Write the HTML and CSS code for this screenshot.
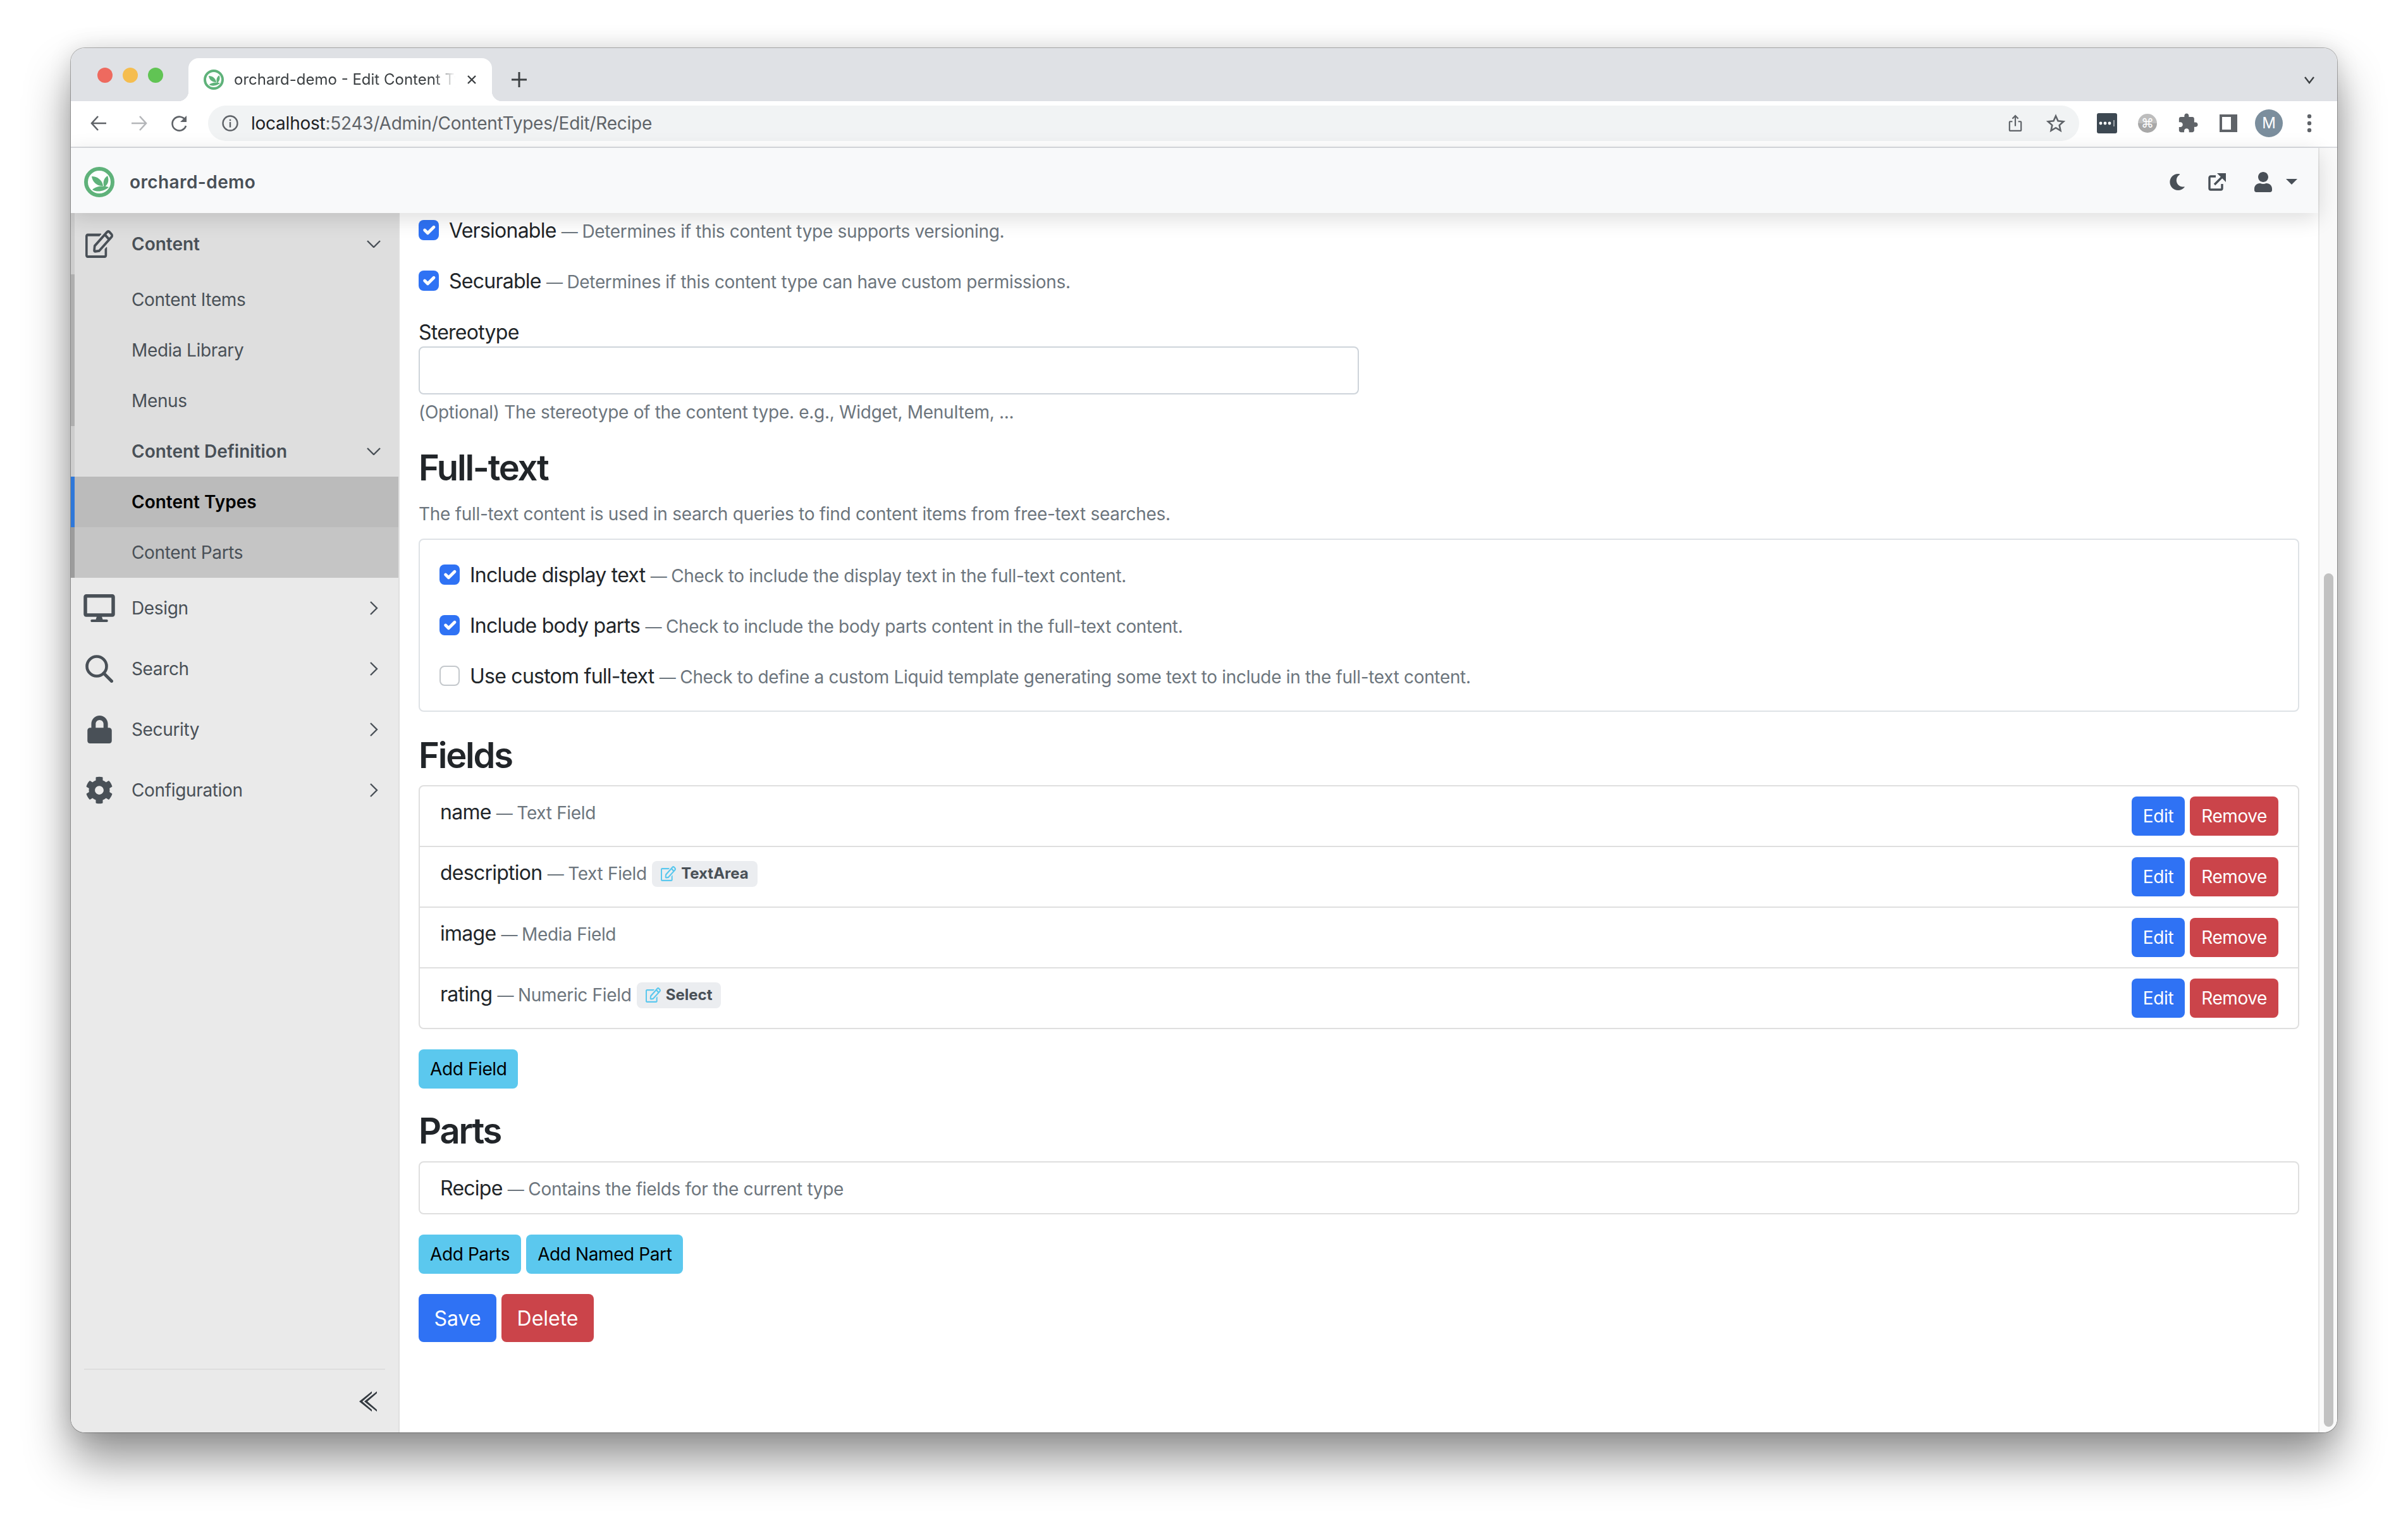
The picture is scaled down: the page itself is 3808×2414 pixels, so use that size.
FILE: index.html
```html
<!DOCTYPE html>
<html lang="en">
<head>
    <meta charset="UTF-8">
    <title>orchard-demo - Edit Content Type</title>
    <link rel="stylesheet" href="styles.css">
</head>
<body>
    <svg class="defs" width="0" height="0">
        <symbol id="logo" viewBox="0 0 48 48">
            <circle cx="24" cy="24" r="21" fill="#fff" stroke="#5fb27a" stroke-width="6"/>
            <path fill="#5fb27a" d="M12 15c9 0 17 6 18 15-9 1-17-6-18-15zM37 14c3 7 1 14-5 18-3-7-1-14 5-18zM13 36c5-5 16-7 26-4-6 6-18 9-26 4z"/>
        </symbol>
        <symbol id="pen" viewBox="0 0 576 512" preserveAspectRatio="none">
            <path d="M402.3 344.9l32-32c5-5 13.7-1.5 13.7 5.7V464c0 26.5-21.5 48-48 48H48c-26.5 0-48-21.5-48-48V112c0-26.5 21.5-48 48-48h273.5c7.1 0 10.7 8.6 5.7 13.7l-32 32c-1.5 1.5-3.5 2.3-5.7 2.3H48v352h352V350.5c0-2.1.8-4.1 2.3-5.6zm156.6-201.8L296.3 405.7l-90.4 10c-26.2 2.9-48.5-19.2-45.6-45.6l10-90.4L432.9 17.1c22.9-22.9 59.9-22.9 82.7 0l43.2 43.2c22.9 22.9 22.9 60 .1 82.8zM460.1 174L402 115.9 216.2 301.8l-7.3 65.3 65.3-7.3L460.1 174zm64.8-79.7l-43.2-43.2c-4.1-4.1-10.8-4.1-14.8 0L436 82l58.1 58.1 30.9-30.9c4-4.2 4-10.8-.1-14.9z"/>
        </symbol>
        <symbol id="tick" viewBox="0 0 20 20">
            <path fill="none" stroke="#fff" stroke-width="3" stroke-linecap="round" stroke-linejoin="round" d="m6 10 3 3 6-6"/>
        </symbol>
        <symbol id="chev-down" viewBox="0 0 22 12">
            <path fill="none" stroke="currentColor" stroke-width="2.4" d="M1 1l10 10L21 1"/>
        </symbol>
        <symbol id="chev-right" viewBox="0 0 14 22">
            <path fill="none" stroke="currentColor" stroke-width="2.4" d="M2 1l10 10L2 21"/>
        </symbol>
    </svg>

    <div class="window">
        <div class="tabstrip">
            <div class="lights">
                <span class="light red"></span>
                <span class="light yellow"></span>
                <span class="light green"></span>
            </div>
            <div class="tab">
                <svg class="favicon"><use href="#logo"/></svg>
                <span class="tab-title">orchard-demo - Edit Content Type</span>
                <svg class="tab-close" viewBox="0 0 16 16"><path fill="none" stroke="#3c4043" stroke-width="2.4" d="M2 2l12 12M14 2L2 14"/></svg>
            </div>
            <svg class="tab-new" viewBox="0 0 24 24"><path fill="none" stroke="#3c4043" stroke-width="3" d="M12 0v24M0 12h24"/></svg>
            <svg class="tab-menu" viewBox="0 0 18 12"><path fill="none" stroke="#3c4043" stroke-width="2.4" d="M2 1l7 9 7-9"/></svg>
        </div>

        <div class="toolbar">
            <svg class="tool" viewBox="0 0 28 28"><path fill="none" stroke="#5f6368" stroke-width="2.6" d="M26 14H3M13 3L3 14l10 11"/></svg>
            <svg class="tool muted" viewBox="0 0 28 28"><path fill="none" stroke="#b4b6b9" stroke-width="2.6" d="M2 14h23M15 3l10 11-10 11"/></svg>
            <svg class="tool" viewBox="0 0 28 28"><path fill="none" stroke="#5f6368" stroke-width="2.6" d="M23 9a11 11 0 1 0 1 9"/><path fill="#5f6368" d="M25 2v10H15z"/></svg>
            <div class="omnibox">
                <svg class="site-info" viewBox="0 0 26 26"><circle cx="13" cy="13" r="11.5" fill="none" stroke="#5f6368" stroke-width="2.4"/><path fill="#5f6368" d="M11.8 11h2.4v8.5h-2.4zM11.8 6.8h2.4v2.4h-2.4z"/></svg>
                <span class="url"><b>localhost</b>:5243/Admin/ContentTypes/Edit/Recipe</span>
                <svg class="omni-share" viewBox="0 0 24 30"><path fill="none" stroke="#5f6368" stroke-width="2.4" d="M7 12H3a1 1 0 0 0-1 1v14a1 1 0 0 0 1 1h18a1 1 0 0 0 1-1V13a1 1 0 0 0-1-1h-4M12 20V3M7 7l5-5 5 5"/></svg>
                <svg class="omni-star" viewBox="0 0 30 30"><path fill="none" stroke="#5f6368" stroke-width="2.6" d="M15 3.5l3.5 7.9 8.6.9-6.4 5.8 1.8 8.5-7.5-4.4-7.5 4.4 1.8-8.5-6.4-5.8 8.6-.9z"/></svg>
            </div>
            <div class="extensions">
                <svg class="ext-pass" viewBox="0 0 32 32"><rect width="32" height="32" rx="3" fill="#3d4852"/><circle cx="6" cy="16" r="2.4" fill="#fff"/><circle cx="13" cy="16" r="2.4" fill="#fff"/><circle cx="20" cy="16" r="2.4" fill="#fff"/><path stroke="#fff" d="M27 11v10"/></svg>
                <span class="ext-cmd">⌘</span>
                <svg class="ext-puzzle" viewBox="0 0 24 24"><path fill="#5f6368" d="M20.5 11H19V7c0-1.1-.9-2-2-2h-4V3.5C13 2.12 11.88 1 10.5 1S8 2.12 8 3.5V5H4c-1.1 0-1.99.9-1.99 2v3.8H3.5c1.49 0 2.7 1.21 2.7 2.7s-1.21 2.7-2.7 2.7H2V20c0 1.1.9 2 2 2h3.8v-1.5c0-1.49 1.21-2.7 2.7-2.7 1.49 0 2.7 1.21 2.7 2.7V22H17c1.1 0 2-.9 2-2v-4h1.5c1.38 0 2.5-1.12 2.5-2.5S21.88 11 20.5 11z"/></svg>
                <span class="ext-panel"></span>
                <span class="avatar">M</span>
                <svg class="ext-menu" viewBox="0 0 8 32"><circle cx="4" cy="5" r="3.2" fill="#5f6368"/><circle cx="4" cy="16" r="3.2" fill="#5f6368"/><circle cx="4" cy="27" r="3.2" fill="#5f6368"/></svg>
            </div>
        </div>

        <div class="viewport">
            <div class="page">
                <nav class="navbar">
                    <svg class="brand-logo"><use href="#logo"/></svg>
                    <span class="brand">orchard-demo</span>
                    <div class="nav-actions">
                        <svg class="act-moon" viewBox="0 0 512 512"><path d="M283.211 512c78.962 0 151.079-35.925 198.857-94.792 7.068-8.708-.639-21.43-11.562-19.35-124.203 23.654-238.262-71.576-238.262-196.954 0-72.222 38.662-138.635 101.498-174.394 9.686-5.512 7.25-20.197-3.756-22.23A258.156 258.156 0 0 0 283.211 0c-141.309 0-256 114.511-256 256 0 141.309 114.511 256 256 256z"/></svg>
                        <svg class="act-open" viewBox="0 0 28 28"><path fill="none" stroke="#495057" stroke-width="3.4" d="M12 5H4a2 2 0 0 0-2 2v17a2 2 0 0 0 2 2h16a2 2 0 0 0 2-2v-7M10 18L24 4"/><path fill="#495057" d="M14 0h14v14z"/></svg>
                        <svg class="act-user" viewBox="0 0 448 512"><path d="M224 256c70.7 0 128-57.3 128-128S294.7 0 224 0 96 57.3 96 128s57.3 128 128 128zm89.6 32h-16.7c-22.2 10.2-46.9 16-72.9 16s-50.6-5.8-72.9-16h-16.7C60.2 288 0 348.2 0 422.4V464c0 26.5 21.5 48 48 48h352c26.5 0 48-21.5 48-48v-41.6c0-74.2-60.2-134.4-134.4-134.4z"/></svg>
                        <span class="caret"></span>
                    </div>
                </nav>

                <div class="layout">
                    <aside class="sidebar">
                        <div class="menu">
                            <div class="menu-open">
                                <a class="menu-head">
                                    <span class="menu-icon"><svg class="ic-pen"><use href="#pen"/></svg></span>
                                    <span class="menu-label strong">Content</span>
                                    <svg class="chev-down"><use href="#chev-down"/></svg>
                                </a>
                                <a class="sub-item strip">Content Items</a>
                                <a class="sub-item strip">Media Library</a>
                                <a class="sub-item strip">Menus</a>
                                <a class="sub-item">
                                    <span class="menu-label strong">Content Definition</span>
                                    <svg class="chev-down"><use href="#chev-down"/></svg>
                                </a>
                                <a class="sub-item active">Content Types</a>
                                <a class="sub-item sibling">Content Parts</a>
                            </div>
                            <a class="menu-item">
                                <span class="menu-icon"><svg class="ic-desktop" viewBox="0 0 576 512"><path d="M528 0H48C21.5 0 0 21.5 0 48v320c0 26.5 21.5 48 48 48h192l-16 48h-72c-13.3 0-24 10.7-24 24s10.7 24 24 24h272c13.3 0 24-10.7 24-24s-10.7-24-24-24h-72l-16-48h192c26.5 0 48-21.5 48-48V48c0-26.5-21.5-48-48-48zm-16 352H64V64h448v288z"/></svg></span>
                                <span class="menu-label">Design</span>
                                <svg class="chev-right"><use href="#chev-right"/></svg>
                            </a>
                            <a class="menu-item">
                                <span class="menu-icon"><svg class="ic-search" viewBox="0 0 44 44"><circle cx="18" cy="18" r="15.5" fill="none" stroke="#495057" stroke-width="4.6"/><path stroke="#495057" stroke-width="5" stroke-linecap="round" d="M29 29l12.5 12.5"/></svg></span>
                                <span class="menu-label">Search</span>
                                <svg class="chev-right"><use href="#chev-right"/></svg>
                            </a>
                            <a class="menu-item">
                                <span class="menu-icon"><svg class="ic-lock" viewBox="0 0 448 512"><path d="M400 224h-24v-72C376 68.2 307.8 0 224 0S72 68.2 72 152v72H48c-26.5 0-48 21.5-48 48v192c0 26.5 21.5 48 48 48h352c26.5 0 48-21.5 48-48V272c0-26.5-21.5-48-48-48zm-104 0H152v-72c0-39.7 32.3-72 72-72s72 32.3 72 72v72z"/></svg></span>
                                <span class="menu-label">Security</span>
                                <svg class="chev-right"><use href="#chev-right"/></svg>
                            </a>
                            <a class="menu-item">
                                <span class="menu-icon"><svg class="ic-gear" viewBox="0 0 512 512"><path d="M487.4 315.7l-42.6-24.6c4.3-23.2 4.3-47 0-70.2l42.6-24.6c4.9-2.8 7.1-8.6 5.5-14-11.1-35.6-30-67.8-54.7-94.6-3.8-4.1-10-5.1-14.8-2.3L380.8 110c-17.9-15.4-38.5-27.3-60.8-35.1V25.8c0-5.6-3.9-10.5-9.4-11.7-36.7-8.2-74.3-7.8-109.2 0-5.5 1.2-9.4 6.1-9.4 11.7V75c-22.2 7.9-42.8 19.8-60.8 35.1L88.7 85.5c-4.9-2.8-11-1.9-14.8 2.3-24.7 26.7-43.6 58.9-54.7 94.6-1.7 5.4.6 11.2 5.5 14L67.3 221c-4.3 23.2-4.3 47 0 70.2l-42.6 24.6c-4.9 2.8-7.1 8.6-5.5 14 11.1 35.6 30 67.8 54.7 94.6 3.8 4.1 10 5.1 14.8 2.3l42.6-24.6c17.9 15.4 38.5 27.3 60.8 35.1v49.2c0 5.6 3.9 10.5 9.4 11.7 36.7 8.2 74.3 7.8 109.2 0 5.5-1.2 9.4-6.1 9.4-11.7v-49.2c22.2-7.9 42.8-19.8 60.8-35.1l42.6 24.6c4.9 2.8 11 1.9 14.8-2.3 24.7-26.7 43.6-58.9 54.7-94.6 1.5-5.5-.7-11.3-5.6-14.1zM256 336c-44.1 0-80-35.9-80-80s35.9-80 80-80 80 35.9 80 80-35.9 80-80 80z"/></svg></span>
                                <span class="menu-label">Configuration</span>
                                <svg class="chev-right"><use href="#chev-right"/></svg>
                            </a>
                        </div>
                        <div class="sidebar-foot">
                            <svg class="collapse" viewBox="0 0 28 32"><path fill="#343a40" d="M20 0v3L5 16l15 13v3L0 16zM28 0v3L13 16l15 13v3L8 16z"/></svg>
                        </div>
                    </aside>

                    <main class="content">
                        <div class="check-row">
                            <span class="check on"><svg><use href="#tick"/></svg></span>
                            <span>Versionable <small><i>—</i> Determines if this content type supports versioning.</small></span>
                        </div>
                        <div class="check-row">
                            <span class="check on"><svg><use href="#tick"/></svg></span>
                            <span>Securable <small><i>—</i> Determines if this content type can have custom permissions.</small></span>
                        </div>

                        <label class="field-label">Stereotype</label>
                        <input class="form-control" type="text">
                        <p class="hint">(Optional) The stereotype of the content type. e.g., Widget, MenuItem, ...</p>

                        <h3 class="first-title">Full-text</h3>
                        <p class="hint lead">The full-text content is used in search queries to find content items from free-text searches.</p>
                        <div class="box">
                            <div class="check-row">
                                <span class="check on"><svg><use href="#tick"/></svg></span>
                                <span>Include display text <small><i>—</i> Check to include the display text in the full-text content.</small></span>
                            </div>
                            <div class="check-row">
                                <span class="check on"><svg><use href="#tick"/></svg></span>
                                <span>Include body parts <small><i>—</i> Check to include the body parts content in the full-text content.</small></span>
                            </div>
                            <div class="check-row">
                                <span class="check"></span>
                                <span>Use custom full-text <small><i>—</i> Check to define a custom Liquid template generating some text to include in the full-text content.</small></span>
                            </div>
                        </div>

                        <h3 class="after-box">Fields</h3>
                        <ul class="list">
                            <li class="list-row">
                                <span class="row-text">name <small><i>—</i> Text Field</small></span>
                                <span class="row-actions"><button class="btn btn-sm btn-primary">Edit</button><button class="btn btn-sm btn-danger">Remove</button></span>
                            </li>
                            <li class="list-row">
                                <span class="row-text">description <small><i>—</i> Text Field</small> <span class="badge"><svg><use href="#pen"/></svg>TextArea</span></span>
                                <span class="row-actions"><button class="btn btn-sm btn-primary">Edit</button><button class="btn btn-sm btn-danger">Remove</button></span>
                            </li>
                            <li class="list-row">
                                <span class="row-text">image <small><i>—</i> Media Field</small></span>
                                <span class="row-actions"><button class="btn btn-sm btn-primary">Edit</button><button class="btn btn-sm btn-danger">Remove</button></span>
                            </li>
                            <li class="list-row">
                                <span class="row-text">rating <small><i>—</i> Numeric Field</small> <span class="badge"><svg><use href="#pen"/></svg>Select</span></span>
                                <span class="row-actions"><button class="btn btn-sm btn-primary">Edit</button><button class="btn btn-sm btn-danger">Remove</button></span>
                            </li>
                        </ul>
                        <div class="btn-row"><button class="btn btn-sm btn-info">Add Field</button></div>

                        <h3>Parts</h3>
                        <ul class="list">
                            <li class="list-row plain"><span class="row-text">Recipe <small><i>—</i> Contains the fields for the current type</small></span></li>
                        </ul>
                        <div class="btn-row"><button class="btn btn-sm btn-info">Add Parts</button><button class="btn btn-sm btn-info">Add Named Part</button></div>
                        <div class="btn-row"><button class="btn btn-primary">Save</button><button class="btn btn-danger">Delete</button></div>
                    </main>
                </div>
            </div>
            <div class="scrollbar"><span class="thumb"></span></div>
        </div>
    </div>
</body>
</html>
```

FILE: styles.css
```css
* {
    box-sizing: border-box;
}
body {
    margin: 0;
    height: 2414px;
    overflow: hidden;
    background: #fff;
    color: #212529;
    font-family: "Inter", "Liberation Sans", sans-serif;
    font-size: 32px;
    line-height: 48px;
    letter-spacing: -0.75px;
}
.defs {
    display: block;
    height: 0;
}
.window {
    display: flex;
    flex-direction: column;
    width: 3584px;
    height: 2190px;
    margin: 76px 0 0 112px;
    border-radius: 22px;
    overflow: hidden;
    background: #fff;
    box-shadow: 0 0 0 1px rgba(0, 0, 0, 0.28), 0 44px 72px rgba(0, 0, 0, 0.42), 0 0 36px rgba(0, 0, 0, 0.12);
}

/* browser chrome */
.tabstrip {
    display: flex;
    align-items: flex-end;
    flex: 0 0 84px;
    background: #dfe1e5;
}
.lights {
    display: flex;
    gap: 16px;
    align-self: flex-start;
    margin: 31px 0 0 42px;
}
.light {
    width: 24px;
    height: 24px;
    border-radius: 50%;
}
.light.red { background: #ee6a5f; }
.light.yellow { background: #f5bd4f; }
.light.green { background: #61c454; }
.tab {
    position: relative;
    display: flex;
    align-items: center;
    width: 480px;
    height: 68px;
    margin-left: 40px;
    padding: 0 24px;
    background: #fff;
    border-radius: 16px 16px 0 0;
}
.tab::before,
.tab::after {
    content: "";
    position: absolute;
    bottom: 0;
    width: 16px;
    height: 16px;
}
.tab::before {
    left: -16px;
    background: radial-gradient(circle at 0 0, #dfe1e5 16px, #fff 16.5px);
}
.tab::after {
    right: -16px;
    background: radial-gradient(circle at 100% 0, #dfe1e5 16px, #fff 16.5px);
}
.favicon {
    flex: none;
    width: 32px;
    height: 32px;
}
.tab-title {
    flex: none;
    width: 350px;
    margin-left: 16px;
    overflow: hidden;
    white-space: nowrap;
    font-size: 24px;
    letter-spacing: 0;
    color: #3c4043;
    -webkit-mask-image: linear-gradient(90deg, #000 90%, transparent 100%);
    mask-image: linear-gradient(90deg, #000 90%, transparent 100%);
}
.tab-close {
    flex: none;
    width: 16px;
    height: 16px;
    margin-left: 18px;
}
.tab-new {
    width: 24px;
    height: 24px;
    margin: 0 0 22px 31px;
}
.tab-menu {
    width: 18px;
    height: 12px;
    margin: 0 35px 27px auto;
}
.toolbar {
    display: flex;
    align-items: center;
    flex: 0 0 74px;
    padding: 0 0 2px 30px;
    background: #fff;
    border-bottom: 2px solid #dadce0;
}
.tool {
    flex: none;
    width: 28px;
    height: 28px;
    margin-right: 36px;
}
.omnibox {
    display: flex;
    align-items: center;
    flex: none;
    width: 2959px;
    height: 56px;
    margin-left: -5px;
    padding: 0 22px;
    background: #f1f3f4;
    border-radius: 28px;
}
.site-info {
    flex: none;
    width: 26px;
    height: 26px;
}
.url {
    margin-left: 20px;
    font-size: 28px;
    letter-spacing: -0.24px;
    color: #5f6368;
    white-space: nowrap;
}
.url b {
    font-weight: 400;
    color: #202124;
}
.omni-share {
    flex: none;
    width: 22px;
    height: 30px;
    margin-left: auto;
    margin-right: 38px;
}
.omni-star {
    flex: none;
    width: 30px;
    height: 30px;
}
.extensions {
    display: flex;
    align-items: center;
    flex: 1;
    padding-left: 28px;
}
.ext-pass {
    flex: none;
    width: 32px;
    height: 32px;
}
.ext-cmd {
    flex: none;
    display: flex;
    align-items: center;
    justify-content: center;
    width: 30px;
    height: 30px;
    margin-left: 33px;
    border-radius: 50%;
    background: linear-gradient(#bdbdbd 50%, #a8a8a8 50%);
    color: #fff;
    font-size: 20px;
    font-family: "DejaVu Sans", sans-serif;
    letter-spacing: 0;
}
.ext-puzzle {
    flex: none;
    width: 34px;
    height: 34px;
    margin-left: 32px;
}
.ext-panel {
    flex: none;
    width: 28px;
    height: 28px;
    margin-left: 33px;
    border: 4px solid #5f6368;
    border-right-width: 10px;
    background: #fff;
}
.avatar {
    flex: none;
    width: 44px;
    height: 44px;
    margin-left: 28px;
    border-radius: 50%;
    background: #7b8e9d;
    color: #fff;
    font-size: 24px;
    line-height: 44px;
    text-align: center;
    letter-spacing: 0;
}
.ext-menu {
    flex: none;
    width: 8px;
    height: 32px;
    margin-left: 38px;
}

/* orchard admin */
.viewport {
    display: flex;
    flex: 1;
    min-height: 0;
}
.page {
    display: flex;
    flex-direction: column;
    width: 3554px;
}
.navbar {
    position: relative;
    z-index: 2;
    display: flex;
    align-items: center;
    flex: 0 0 103px;
    padding: 4px 0 0 21px;
    background: #f8f9fa;
    box-shadow: 0 8px 32px rgba(0, 0, 0, 0.14);
}
.brand-logo {
    flex: none;
    width: 48px;
    height: 48px;
}
.brand {
    margin-left: 24px;
    font-size: 28px;
    font-weight: 600;
    letter-spacing: 0.4px;
    color: #495057;
}
.nav-actions {
    display: flex;
    align-items: center;
    margin-left: auto;
    padding-right: 33px;
    fill: #495057;
}
.act-moon {
    width: 26px;
    height: 28px;
}
.act-open {
    width: 28px;
    height: 28px;
    margin-left: 36px;
}
.act-user {
    width: 28px;
    height: 32px;
    margin-left: 45px;
}
.caret {
    width: 0;
    height: 0;
    margin-left: 22px;
    border-top: 9px solid #495057;
    border-left: 9px solid transparent;
    border-right: 9px solid transparent;
}
.layout {
    display: flex;
    flex: 1;
    min-height: 0;
}
.sidebar {
    display: flex;
    flex-direction: column;
    flex: 0 0 520px;
    background: #eaeaea;
    border-right: 2px solid #e0e0e0;
    font-size: 28px;
    letter-spacing: -0.35px;
    color: #495057;
}
.menu {
    flex: 1;
}
.menu-open {
    background: #dedede;
    width: 518px;
}
.menu-head {
    display: flex;
    align-items: center;
    height: 97px;
    padding: 0 28px 0 14px;
    border-left: 6px solid #cdcdcd;
}
.menu-icon {
    display: flex;
    align-items: center;
    justify-content: center;
    flex: none;
    width: 50px;
    margin-right: 26px;
    fill: #495057;
}
.menu-icon svg {
    display: block;
    height: 44px;
}
.ic-pen { width: 44px; }
.ic-desktop { width: 50px; }
.ic-search { width: 44px; }
.ic-lock { width: 39px; }
.ic-gear { width: 44px; }
.menu-label {
    flex: 1;
}
.strong {
    font-weight: 600;
    letter-spacing: 0;
}
.chev-down {
    flex: none;
    width: 22px;
    height: 12px;
}
.chev-right {
    flex: none;
    width: 14px;
    height: 22px;
    margin-right: 4px;
}
.sub-item {
    display: flex;
    align-items: center;
    height: 80px;
    padding: 0 28px 0 90px;
    border-left: 6px solid #cdcdcd;
}
.sub-item.strip {
    border-left-color: #afafaf;
}
.sub-item.active {
    background: #bbb;
    border-left-color: #2f78d9;
    font-weight: 600;
    letter-spacing: 0;
    color: #000;
}
.sub-item.sibling {
    background: #c5c5c5;
    border-left-color: #9c9c9c;
}
.menu-item {
    display: flex;
    align-items: center;
    height: 96px;
    padding: 0 28px 0 20px;
}
.sidebar-foot {
    display: flex;
    align-items: center;
    justify-content: flex-end;
    flex: 0 0 101px;
    margin: 0 21px;
    padding-right: 13px;
    border-top: 2px solid #dedede;
}
.collapse {
    width: 28px;
    height: 32px;
}
.content {
    flex: 1;
    min-width: 0;
    padding: 3px 30px 0 30px;
    overflow: hidden;
}
.check-row {
    display: flex;
    align-items: center;
    gap: 16px;
    height: 48px;
    margin-bottom: 32px;
    white-space: nowrap;
}
.check-row > span:last-child {
    padding-top: 2px;
}
.box .check-row:last-child {
    margin-bottom: 0;
}
.check {
    flex: none;
    width: 32px;
    height: 32px;
    border: 2px solid #c4c8cc;
    border-radius: 8px;
    background: #fff;
}
.check.on {
    border: 0;
    background: #2f72f4;
}
.check svg {
    display: block;
    width: 32px;
    height: 32px;
}
small {
    font-size: 28px;
    line-height: 1;
    letter-spacing: -0.33px;
    color: #6c757d;
}
small i {
    font-size: 26px;
    font-style: normal;
    letter-spacing: -1px;
}
.field-label {
    display: block;
    height: 48px;
    padding-top: 2px;
}
.form-control {
    display: block;
    width: 1487px;
    height: 76px;
    padding: 12px 24px;
    border: 2px solid #ced4da;
    border-radius: 8px;
    background: #fff;
}
.hint {
    margin: 7px 0 0;
    font-size: 28px;
    line-height: 42px;
    letter-spacing: -0.3px;
    color: #6c757d;
}
.hint.lead {
    margin: 18px 0;
}
h3 {
    margin: 34px 0 14px;
    font-size: 56px;
    line-height: 67px;
    font-weight: 600;
    letter-spacing: -2.2px;
}
h3.first-title {
    margin: 34px 0 0;
}
h3.after-box {
    margin: 36px 0 13px;
}
.box {
    padding: 31px;
    border: 2px solid #dee2e6;
    border-radius: 8px;
}
.list {
    margin: 0;
    padding: 0;
    list-style: none;
    border: 2px solid #dfdfdf;
    border-radius: 8px;
}
.list-row {
    display: flex;
    align-items: flex-start;
    justify-content: space-between;
    height: 96px;
    padding: 16px 31px 16px 32px;
    border-bottom: 2px solid #dfdfdf;
}
.list-row:last-child {
    height: 94px;
    border-bottom: 0;
}
.list-row.plain {
    height: 80px;
}
.row-text {
    padding-top: 1px;
}
.row-actions {
    display: flex;
    gap: 8px;
}
.badge {
    display: inline-flex;
    align-items: center;
    height: 41px;
    padding: 0 14px;
    border-radius: 8px;
    background: #ebedf0;
    color: #495057;
    font-size: 24px;
    font-weight: 700;
    line-height: 1;
    letter-spacing: 0;
    vertical-align: -2px;
}
.badge svg {
    width: 24px;
    height: 24px;
    margin-right: 8px;
    fill: #5bc8ee;
}
.btn-row {
    display: flex;
    gap: 8px;
    margin-top: 32px;
}
.btn {
    height: 76px;
    padding: 0 24.5px;
    border: 0;
    border-radius: 8px;
    font-family: inherit;
    font-size: 32px;
    letter-spacing: 0;
}
.btn-sm {
    height: 62px;
    padding: 0 18px;
    font-size: 28px;
    letter-spacing: -0.4px;
}
.btn-primary {
    background: #2f72f4;
    color: #fff;
}
.btn-danger {
    background: #cb444a;
    color: #fff;
}
.btn-info {
    background: #5bc8ee;
    color: #000;
}
.scrollbar {
    flex: 1;
    padding: 673px 6px 0 7px;
    background: #f9f9f9;
    border-left: 2px solid #e8e8e8;
}
.thumb {
    display: block;
    height: 1350px;
    border-radius: 8px;
    background: #c1c1c1;
}
```
